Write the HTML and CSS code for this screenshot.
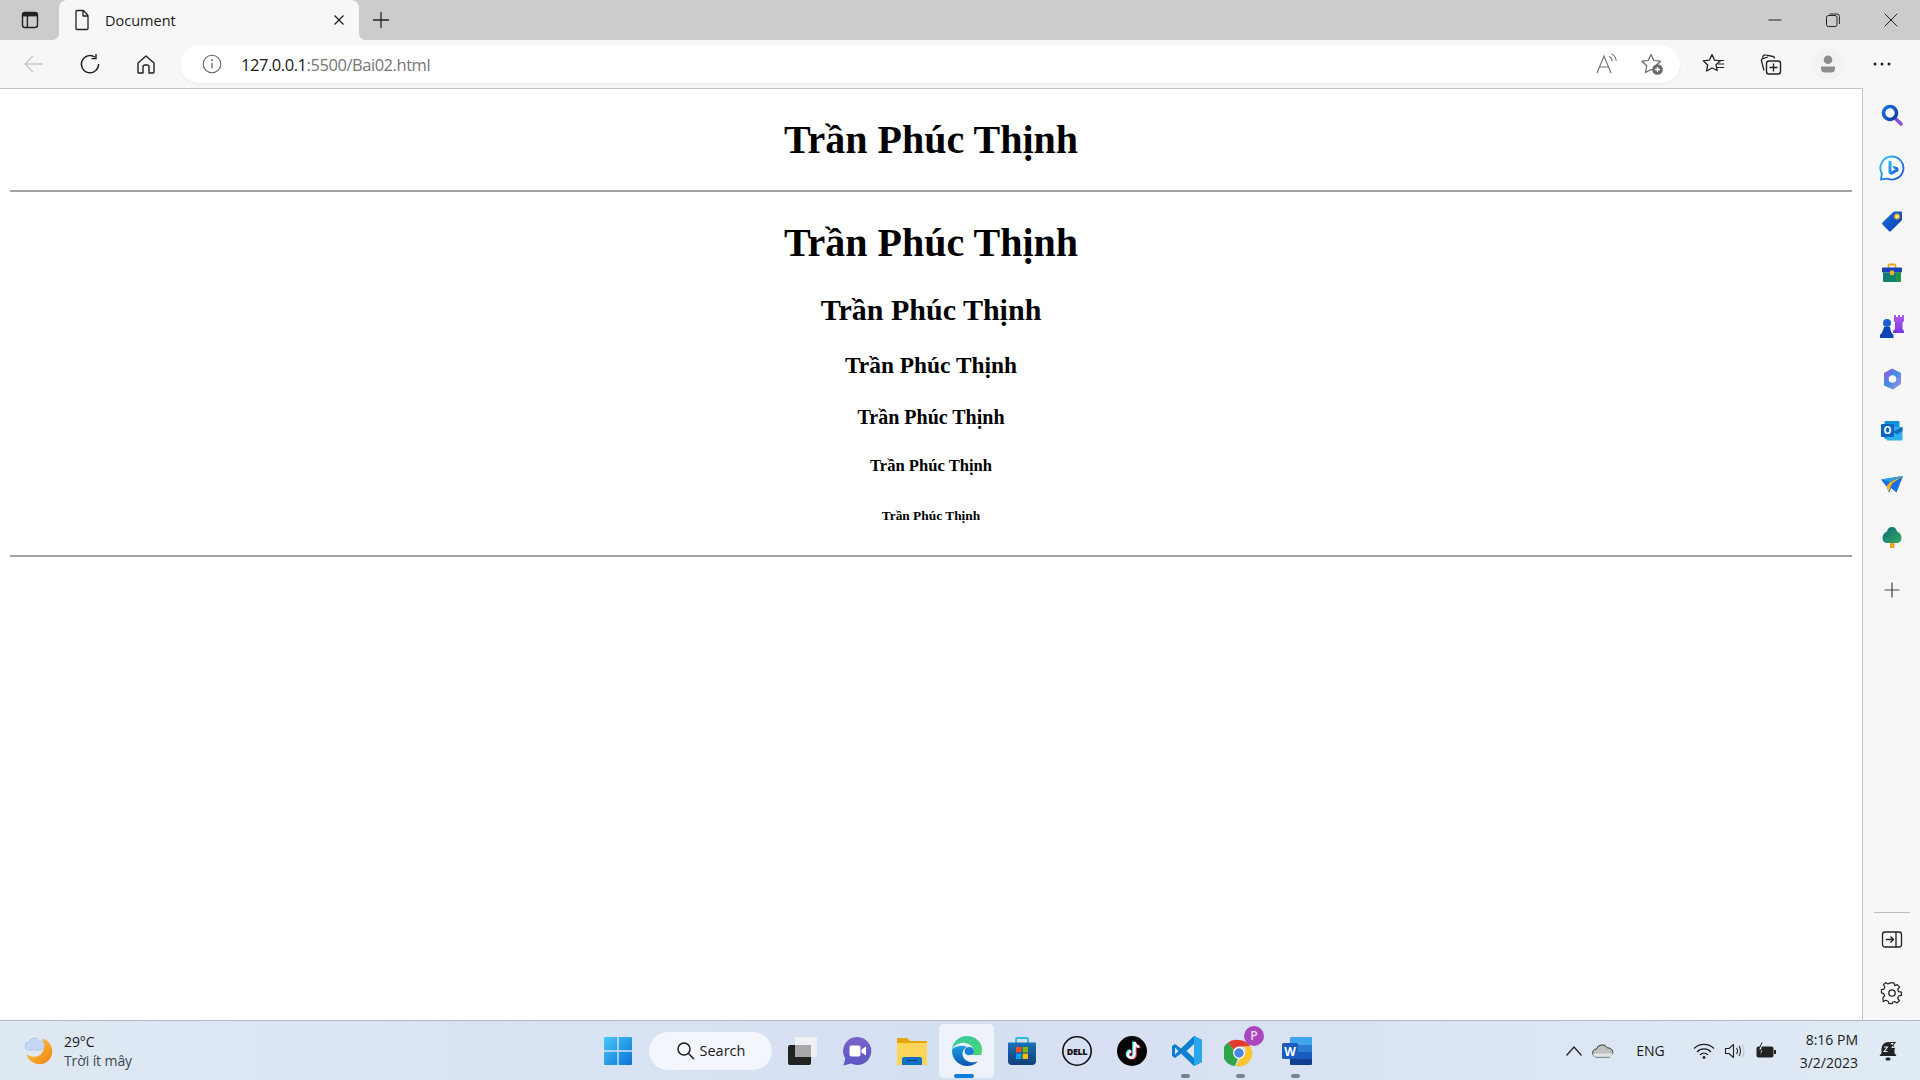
FILE: index.html
```html
<!DOCTYPE html>
<html lang="vi">
<head>
<meta charset="utf-8">
<title>Document</title>
<link rel="stylesheet" href="styles.css">
</head>
<body>
<svg class="defs" width="0" height="0" aria-hidden="true">
  <defs>
    <linearGradient id="gBlue" x1="0" y1="0" x2="1" y2="1"><stop offset="0" stop-color="#1c6fe0"/><stop offset="1" stop-color="#0b3fa8"/></linearGradient>
    <linearGradient id="gBing" x1="0" y1="0" x2="1" y2="1"><stop offset="0" stop-color="#27c3f5"/><stop offset="1" stop-color="#1a4fd0"/></linearGradient>
    <linearGradient id="gPurple" x1="0" y1="0" x2="0" y2="1"><stop offset="0" stop-color="#b05cf0"/><stop offset="1" stop-color="#7a35e0"/></linearGradient>
    <linearGradient id="gM365" x1="0" y1="0" x2="1" y2="1"><stop offset="0" stop-color="#9a55d8"/><stop offset=".5" stop-color="#3f8fe8"/><stop offset="1" stop-color="#b98ae0"/></linearGradient>
    <linearGradient id="gTree" x1="0" y1="0" x2="1" y2="1"><stop offset="0" stop-color="#0c6a7c"/><stop offset="1" stop-color="#35ab5c"/></linearGradient>
    <linearGradient id="gMoon" x1="0" y1="0" x2="1" y2="1"><stop offset="0" stop-color="#fcd14a"/><stop offset="1" stop-color="#f27f14"/></linearGradient>
    <linearGradient id="gWin" x1="0" y1="0" x2="1" y2="1"><stop offset="0" stop-color="#48c8fa"/><stop offset="1" stop-color="#0a72d6"/></linearGradient>
    <linearGradient id="gTeams" x1="0" y1="0" x2="0" y2="1"><stop offset="0" stop-color="#7c63c8"/><stop offset="1" stop-color="#5a57c0"/></linearGradient>
    <linearGradient id="gEdge" x1="0" y1="0" x2="1" y2="1"><stop offset="0" stop-color="#35c9a8"/><stop offset="1" stop-color="#46d86e"/></linearGradient>
    <linearGradient id="gEdge2" x1="0" y1="0" x2="0" y2="1"><stop offset="0" stop-color="#1f9fe0"/><stop offset="1" stop-color="#0b55b0"/></linearGradient>
    <linearGradient id="gStore" x1="0" y1="0" x2="0" y2="1"><stop offset="0" stop-color="#1a70b8"/><stop offset="1" stop-color="#123f78"/></linearGradient>
  </defs>
</svg>
<div class="window">
  <header class="tabbar">
    <div class="tabstrip-btn">
      <svg class="ic" width="20" height="20" viewBox="0 0 20 20"><rect x="2.5" y="2.5" width="15" height="15" rx="2.5" fill="none" stroke="#222" stroke-width="1.4"/><path d="M3 3h14v3.4H3z" fill="#222"/><path d="M7.4 6v11" stroke="#222" stroke-width="1.4"/></svg>
    </div>
    <div class="tab">
      <svg class="tab-doc" width="20" height="22" viewBox="0 0 20 22"><path d="M4 2.5a1 1 0 0 1 1-1h6.5L16 6.5V19.5a1 1 0 0 1-1 1H5a1 1 0 0 1-1-1zM11 2v5h5" fill="none" stroke="#222" stroke-width="1.3" stroke-linejoin="round"/></svg>
      <span class="tab-title">Document</span>
      <svg class="tab-close" width="12" height="12" viewBox="0 0 12 12"><path d="M1.5 1.5l9 9M10.5 1.5l-9 9" stroke="#222" stroke-width="1.4"/></svg>
    </div>
    <div class="newtab">
      <svg width="18" height="18" viewBox="0 0 18 18"><path d="M9 1v16M1 9h16" stroke="#222" stroke-width="1.3"/></svg>
    </div>
    <div class="win-controls">
      <div class="win-btn"><svg width="14" height="14" viewBox="0 0 14 14"><path d="M0.5 7h13" stroke="#222" stroke-width="1"/></svg></div>
      <div class="win-btn"><svg width="14" height="14" viewBox="0 0 14 14"><rect x="0.5" y="2.5" width="10.5" height="11" rx="2" fill="none" stroke="#222"/><path d="M3.5 1h7.5a2.4 2.4 0 0 1 2.4 2.4V11" fill="none" stroke="#222"/></svg></div>
      <div class="win-btn"><svg width="14" height="14" viewBox="0 0 14 14"><path d="M.7.7l12.6 12.6M13.3.7L.7 13.3" stroke="#222" stroke-width="1"/></svg></div>
    </div>
  </header>

  <nav class="toolbar">
    <div class="tool"><svg width="22" height="22" viewBox="0 0 22 22"><path d="M20 11H2.5M10 3l-8 8 8 8" fill="none" stroke="#c9c9c9" stroke-width="1.4"/></svg></div>
    <div class="tool"><svg width="22" height="22" viewBox="0 0 22 22"><path d="M16 4.2A8.6 8.6 0 1 0 19.6 11M17 1v4.6h-4.6" fill="none" stroke="#222" stroke-width="1.4"/></svg></div>
    <div class="tool"><svg width="22" height="22" viewBox="0 0 22 22"><path d="M3 10L11 3l8 7v9a1 1 0 0 1-1 1h-4v-6a2 2 0 0 0-2-2h-2a2 2 0 0 0-2 2v6H4a1 1 0 0 1-1-1z" fill="none" stroke="#222" stroke-width="1.4" stroke-linejoin="round"/></svg></div>
    <div class="address">
      <svg class="addr-info" width="20" height="20" viewBox="0 0 20 20"><circle cx="10" cy="10" r="8.8" fill="none" stroke="#666" stroke-width="1.1"/><path d="M10 9v5.5" stroke="#666" stroke-width="1.3"/><circle cx="10" cy="6" r="1" fill="#666"/></svg>
      <span class="url"><span class="url-host">127.0.0.1</span><span class="url-rest">:5500/Bai02.html</span></span>
      <svg class="addr-read" width="24" height="22" viewBox="0 0 24 22"><path d="M2 20L9 3l7 17M4.6 14h8.8" fill="none" stroke="#777" stroke-width="1.2"/><path d="M14 3.5c2 .8 3 2.5 3.2 4.5M16.5 1c3 1.2 4.4 3.6 4.7 6.7" fill="none" stroke="#777" stroke-width="1.1"/></svg>
      <svg class="addr-fav" width="24" height="24" viewBox="0 0 24 24"><path d="M11 2.5l2.8 6 6.7.7-4.5 4.3 1 5.5-6-1.5-5.5 3 1.2-6.7L2 9.2l6.3-.7z" fill="none" stroke="#666" stroke-width="1.2" stroke-linejoin="round"/><circle cx="17.5" cy="17.5" r="5.3" fill="#6a6a6a"/><path d="M17.5 15v5M15 17.5h5" stroke="#fff" stroke-width="1.3"/></svg>
    </div>
    <div class="tool tool-first"><svg width="24" height="24" viewBox="0 0 24 24"><path d="M10 2.5l2.5 5.7 6 .6-4.5 4 1.2 5.7L10 16l-5.5 3 1.2-6-4.5-4.2 6.2-.6z" fill="none" stroke="#222" stroke-width="1.3" stroke-linejoin="round"/><path d="M15 8.5h7M16 12h6M14.5 15.5h7.5" stroke="#222" stroke-width="1.2"/></svg></div>
    <div class="tool"><svg width="24" height="24" viewBox="0 0 24 24"><path d="M6 18.500l-2.500-9.500a2 2 0 0 1 1.300-2.400L10 5" fill="none" stroke="#222" stroke-width="1.300"/><path d="M4.500 5.800L5 4.200a2 2 0 0 1 2.400-1.300L15 4.500a2 2 0 0 1 1.500 2" fill="none" stroke="#222" stroke-width="1.300"/><rect x="8.500" y="9" width="14" height="13" rx="2.500" fill="none" stroke="#222" stroke-width="1.400"/><path d="M15.500 11.500v8M11.500 15.500h8" stroke="#222" stroke-width="1.300"/></svg></div>
    <div class="tool tool-profile"><span class="avatar"><svg width="20" height="20" viewBox="0 0 20 20"><circle cx="10" cy="5.800" r="4.300" fill="#8c8c8c"/><path d="M3 12.500h14v2a4 4 0 0 1-4 4H7a4 4 0 0 1-4-4z" fill="#8c8c8c"/></svg></span></div>
    <div class="tool"><svg width="20" height="6" viewBox="0 0 20 6"><circle cx="3" cy="3" r="1.500" fill="#222"/><circle cx="10" cy="3" r="1.500" fill="#222"/><circle cx="17" cy="3" r="1.500" fill="#222"/></svg></div>
  </nav>

  <div class="main">
    <main class="content">
      <h1 class="h-one">Trần Phúc Thịnh</h1>
      <hr class="rule">
      <h1 class="h-one">Trần Phúc Thịnh</h1>
      <h2 class="h-two">Trần Phúc Thịnh</h2>
      <h3 class="h-three">Trần Phúc Thịnh</h3>
      <h4 class="h-four">Trần Phúc Thịnh</h4>
      <h5 class="h-five">Trần Phúc Thịnh</h5>
      <h6 class="h-six">Trần Phúc Thịnh</h6>
      <hr class="rule">
    </main>
    <aside class="sidebar">
      <div class="side-btn"><svg width="24" height="24" viewBox="0 0 24 24"><path d="M15 15l6 6" stroke="#8a4fe0" stroke-width="3.600" stroke-linecap="round"/><circle cx="10" cy="10" r="6.500" fill="#fff" stroke="url(#gBlue)" stroke-width="3.600"/></svg></div>
      <div class="side-btn"><svg width="26" height="26" viewBox="0 0 26 26"><path d="M13 1.500a11.500 11.500 0 1 1-4.500 22.100L2 24.500l.9-5.800A11.500 11.500 0 0 1 13 1.500z" fill="#fff" stroke="url(#gBing)" stroke-width="1.800"/><path d="M9.500 5.500l3 1v10l4-2.300-2-1-1-2.700 6 2.200v3.300l-7 4-3-1.700z" fill="url(#gBing)"/></svg></div>
      <div class="side-btn"><svg width="24" height="24" viewBox="0 0 24 24"><path d="M2.500 13.500L13 3.200a2 2 0 0 1 1.400-.6H21a1 1 0 0 1 1 1v6.800a2 2 0 0 1-.6 1.400L11 22a1.500 1.500 0 0 1-2.100 0L2.500 15.600a1.500 1.500 0 0 1 0-2.100z" fill="url(#gBlue)"/><circle cx="17" cy="7.500" r="2.300" fill="#fbe9a8" stroke="#f0a81c" stroke-width="1.200"/></svg></div>
      <div class="side-btn"><svg width="24" height="24" viewBox="0 0 24 24"><path d="M8.500 7V4.500a1 1 0 0 1 1-1h5a1 1 0 0 1 1 1V7" fill="none" stroke="#eaa62a" stroke-width="1.800"/><rect x="2" y="6.500" width="20" height="5" rx="1" fill="#1a3fb8"/><path d="M3 11.500h18V20a1 1 0 0 1-1 1H4a1 1 0 0 1-1-1z" fill="#12806e"/><path d="M16 11.500h5V20a1 1 0 0 1-1 1h-4z" fill="#259448"/><rect x="10" y="9.500" width="4" height="4.500" rx="1" fill="#f1b32a"/></svg></div>
      <div class="side-btn"><svg width="26" height="26" viewBox="0 0 26 26"><path d="M15 2h2v2h2V2h2v2h2V2h2v6l-1.500 1.500V16L25 18v2H14v-2l2-2V9.500L15 8z" fill="url(#gPurple)"/><circle cx="8" cy="10" r="4" fill="#1c5fd0"/><path d="M5 14h6l.5 3 1.500 3.500a2 2 0 0 1 1.500 2V25H1v-2.500a2 2 0 0 1 1.500-2L4 17z" fill="#0f45b8"/></svg></div>
      <div class="side-btn"><svg width="24" height="24" viewBox="0 0 24 24"><path d="M12 1.500l9 4.500v11l-8 5.500-9-4V6z" fill="url(#gM365)"/><circle cx="12.500" cy="12" r="3.800" fill="#f7f7f7"/></svg></div>
      <div class="side-btn"><svg width="24" height="24" viewBox="0 0 24 24"><rect x="4.500" y="2" width="15" height="18" rx="1" fill="#1490df"/><path d="M13 8h8.500a1 1 0 0 1 1 1v11.500a1 1 0 0 1-1 1h-14a1 1 0 0 1-1-1V17z" fill="#30b0ea"/><path d="M13 12.500l9.500-4.500v4l-6 3.500z" fill="#0f6cbd"/><rect x="1" y="5" width="13" height="13" rx="1" fill="#0a64c0"/><text class="svg-o" x="7.500" y="15.300" text-anchor="middle">O</text></svg></div>
      <div class="side-btn"><svg width="24" height="24" viewBox="0 0 24 24"><path d="M1 7.500L23 4 16.500 20.500 11 16l-2 5-2.500-6.500z" fill="#1a6ee0"/><path d="M1 7.500L23 4l-13 5.500z" fill="#2aa0e8"/><path d="M6.500 14.500L10 10l13-6-11 7.500L8.500 20z" fill="#f5b31e"/></svg></div>
      <div class="side-btn"><svg width="24" height="24" viewBox="0 0 24 24"><rect x="10" y="17" width="4.500" height="6" fill="#f0a51e"/><path d="M12 2c3 0 4.500 2 5 4.500 2.800 1 4.500 3.800 4.500 6.500 0 3-2 5-4.500 5H7c-2.500 0-4.500-2-4.500-5 0-2.700 1.700-5.500 4.500-6.500C7.500 4 9 2 12 2z" fill="url(#gTree)"/></svg></div>
      <div class="side-btn"><svg width="16" height="16" viewBox="0 0 16 16"><path d="M8 .5v15M.5 8h15" stroke="#444" stroke-width="1.200"/></svg></div>
      <div class="side-spacer"></div>
      <div class="side-line"></div>
      <div class="side-btn"><svg width="22" height="22" viewBox="0 0 22 22"><rect x="1.500" y="3" width="19" height="15" rx="2.500" fill="none" stroke="#222" stroke-width="1.300"/><path d="M15 3v15" stroke="#222" stroke-width="1.300"/><path d="M5 10.500h7M9.500 7.500l3 3-3 3" fill="none" stroke="#222" stroke-width="1.300"/></svg></div>
      <div class="side-btn"><svg width="24" height="24" viewBox="0 0 24 24"><path d="M10 2h4l.8 3 2.700-1.100L20 6.500l-2 2.300.9 2.700 3 .5v3.500l-3 .6-1 2.500 2 2.400-2.600 2.500-2.700-1.500-2 .9-.6 1.500h-3.500l-.8-2.600-2.700-1.100-2.500 1.400L2 18.500l1.800-2.400L3 13.500l-2.500-.7v-3.600l2.800-.5.800-2.500L2.500 4l2.600-2.300L7.500 3.300 9.800 2z" transform="translate(1 0) scale(.93)" fill="none" stroke="#222" stroke-width="1.300" stroke-linejoin="round"/><circle cx="12" cy="12" r="3.200" fill="none" stroke="#222" stroke-width="1.300"/></svg></div>
    </aside>
  </div>

  <footer class="taskbar">
    <div class="weather">
      <svg width="32" height="32" viewBox="0 0 32 32"><path d="M19 3.500A13 13 0 1 1 3.500 19c3 3 12 5 16-2 2-3.500 1.500-9-.5-13.500z" fill="url(#gMoon)"/><path d="M6 15a4 4 0 0 1 0-8 5.500 5.500 0 0 1 10-1.500A4.500 4.500 0 0 1 17 15z" fill="#c6d8f5" stroke="#9cb8e8" stroke-width=".6"/></svg>
      <div class="weather-text"><span class="temp">29°C</span><span class="cond">Trời ít mây</span></div>
    </div>
    <div class="apps">
      <div class="app"><svg width="30" height="30" viewBox="0 0 30 30"><path d="M1 2a1 1 0 0 1 1-1h12.300v13.300H1zM15.700 1H28a1 1 0 0 1 1 1v12.300H15.700zM1 15.700h13.300V29H2a1 1 0 0 1-1-1zM15.700 15.700H29V28a1 1 0 0 1-1 1H15.700z" fill="url(#gWin)"/></svg></div>
      <div class="search">
        <svg width="19" height="19" viewBox="0 0 19 19"><circle cx="8" cy="8" r="6" fill="none" stroke="#1a1a1a" stroke-width="1.500"/><path d="M12.500 12.500l5.500 5.500" stroke="#1a1a1a" stroke-width="1.500"/></svg>
        <span>Search</span>
      </div>
      <div class="app"><svg width="30" height="30" viewBox="0 0 30 30"><rect x="1" y="9" width="23" height="20" rx="2" fill="#222"/><rect x="8" y="1" width="22" height="20" rx="1.500" fill="#f3f3f5" opacity=".9"/><rect x="8" y="9" width="16" height="12" fill="#a8a8a8"/></svg></div>
      <div class="app"><svg width="30" height="30" viewBox="0 0 30 30"><path d="M15.500 1a14 14 0 1 1-6.500 26.500L1.500 29.500l1.800-7A14 14 0 0 1 15.500 1z" fill="url(#gTeams)"/><rect x="7.500" y="9.500" width="11" height="11" rx="2" fill="#fff"/><path d="M19.500 13.500l4.500-3v9l-4.500-3z" fill="#fff"/></svg></div>
      <div class="app"><svg width="32" height="30" viewBox="0 0 32 30"><path d="M1 3a1 1 0 0 1 1-1h9l3 3h16a1 1 0 0 1 1 1v22a1 1 0 0 1-1 1H2a1 1 0 0 1-1-1z" fill="#e5a505"/><path d="M1 7h30v21a1 1 0 0 1-1 1H2a1 1 0 0 1-1-1z" fill="#fcd65a"/><path d="M6 29v-6a2 2 0 0 1 2-2h16a2 2 0 0 1 2 2v6z" fill="#1070c8"/><path d="M11 24.500h10" stroke="#0c3f80" stroke-width="1.200"/></svg></div>
      <div class="app app-active"><svg width="32" height="32" viewBox="0 0 32 32"><path d="M16 1C8 1 1.500 7 1 15c2-5 8-8 13-7 6 1 9 5 9 9 0 2-1.500 3-4 3h11c1-2 1-4 1-6C31 7 24 1 16 1z" fill="url(#gEdge)"/><path d="M1 15c-.5 9 7 16 15 16 4 0 8-1.500 11-4.500-6 2-13 0-15-5-1.500-4 .5-8 4-9.500-6-3-14 .5-15 3z" fill="url(#gEdge2)"/><path d="M19 20c-5 1-7-4-4-7 3-2 8-1 8 4 0 2-1.500 3-4 3z" fill="#1d7ed8"/></svg><span class="active-dot"></span></div>
      <div class="app"><svg width="30" height="30" viewBox="0 0 30 30"><path d="M9 7V3.500a1.500 1.500 0 0 1 1.500-1.500h9A1.500 1.500 0 0 1 21 3.500V7" fill="none" stroke="#28b8ea" stroke-width="1.800"/><path d="M1 7.500a1 1 0 0 1 1-1h26a1 1 0 0 1 1 1V25a4 4 0 0 1-4 4H5a4 4 0 0 1-4-4z" fill="url(#gStore)"/><rect x="9" y="11" width="5.400" height="5.400" fill="#f25022"/><rect x="15.600" y="11" width="5.400" height="5.400" fill="#7fba00"/><rect x="9" y="17.600" width="5.400" height="5.400" fill="#00a4ef"/><rect x="15.600" y="17.600" width="5.400" height="5.400" fill="#ffb900"/></svg></div>
      <div class="app"><svg width="32" height="32" viewBox="0 0 32 32"><circle cx="16" cy="16" r="14.200" fill="none" stroke="#111" stroke-width="1.600"/><text class="svg-dell" x="16" y="19.500" text-anchor="middle">DELL</text></svg></div>
      <div class="app"><svg width="32" height="32" viewBox="0 0 32 32"><circle cx="16" cy="16" r="15" fill="#050505"/><path d="M18.500 7v12.500a3.300 3.300 0 1 1-3.300-3.300" fill="none" stroke="#25f4ee" stroke-width="2.600" transform="translate(-1 -.6)"/><path d="M18.500 7v12.500a3.300 3.300 0 1 1-3.300-3.300M18.500 7c.4 2.800 2.300 4.500 4.800 4.700" fill="none" stroke="#fe2c55" stroke-width="2.600" transform="translate(1 .6)"/><path d="M18.500 7v12.500a3.300 3.300 0 1 1-3.300-3.300M18.500 7c.4 2.800 2.300 4.500 4.800 4.700" fill="none" stroke="#fff" stroke-width="2.400"/></svg></div>
      <div class="app app-open"><svg width="32" height="32" viewBox="0 0 32 32"><path d="M23 1l8 4v22l-8 4-13-12.500-6 4.500-3-2V11l3-2 6 4.500z" fill="#0b7fd0"/><path d="M23 1l8 4v22l-8 4z" fill="#2aa6ee"/><path d="M23 9l-7.500 7 7.500 7zM4 12.500v7l3.500-3.500z" fill="#dde5f3"/></svg><span class="open-dot"></span></div>
      <div class="app app-open"><svg class="chrome" width="32" height="32" viewBox="0 0 32 32"><path d="M15 5a13 13 0 0 1 11.300 6.500H15a6 6 0 0 0-5.500 3.500L4 7.500A13 13 0 0 1 15 5z" fill="#e33b2e"/><path d="M4 7.500L9.500 15a6 6 0 0 0 5 7L11 31A13 13 0 0 1 4 7.500z" fill="#2fa54a"/><path d="M26.300 11.500A13 13 0 0 1 12 31l5-9a6 6 0 0 0 2.500-10.500z" fill="#fbc52d"/><circle cx="15" cy="18" r="5.300" fill="#4a86ea" stroke="#fff" stroke-width="1.200"/></svg><span class="badge">P</span><span class="open-dot"></span></div>
      <div class="app app-open"><svg width="32" height="30" viewBox="0 0 32 30"><path d="M9 2a1 1 0 0 1 1-1h20a1 1 0 0 1 1 1v7H9z" fill="#41a5ee"/><rect x="9" y="9" width="22" height="7" fill="#2b7cd3"/><rect x="9" y="16" width="22" height="7" fill="#185abd"/><path d="M9 23h22v5a1 1 0 0 1-1 1H10a1 1 0 0 1-1-1z" fill="#103f91"/><rect x="1" y="7" width="16" height="16" rx="1.500" fill="#1a5cbf"/><text class="svg-w" x="9" y="19.700" text-anchor="middle">W</text></svg><span class="open-dot"></span></div>
    </div>
    <div class="tray">
      <svg class="tray-ic" width="18" height="12" viewBox="0 0 18 12"><path d="M1.500 10.500L9 2l7.500 8.500" fill="none" stroke="#222" stroke-width="1.200"/></svg>
      <svg class="tray-ic" width="22" height="14" viewBox="0 0 22 14"><path d="M5 13a4 4 0 0 1-.5-8A6 6 0 0 1 15.500 4 4.500 4.500 0 0 1 17 13z" fill="#c0c0c0" stroke="#333" stroke-width="1"/><path d="M1 9.500h20v1a2.500 2.500 0 0 1-2.500 2.500h-15A2.500 2.500 0 0 1 1 10.500z" fill="#f0f0f0" opacity=".75"/></svg>
      <span class="lang">ENG</span>
      <svg class="tray-ic" width="22" height="18" viewBox="0 0 22 18"><path d="M1 6.500a14 14 0 0 1 20 0M4 10a9.500 9.500 0 0 1 14 0M7 13a5 5 0 0 1 8 0" fill="none" stroke="#222" stroke-width="1.200"/><circle cx="11" cy="15.500" r="1.400" fill="#222"/></svg>
      <svg class="tray-ic" width="22" height="18" viewBox="0 0 22 18"><path d="M1.500 6.500h3.500L9.500 2.500v13L5 11.500H1.500z" fill="none" stroke="#222" stroke-width="1.100" stroke-linejoin="round"/><path d="M12.500 6c1.200 1.700 1.200 4.300 0 6M15 4c2 2.800 2 7.200 0 10" fill="none" stroke="#222" stroke-width="1.100"/><path d="M18 2.500c2.600 3.800 2.600 9.200 0 13" fill="none" stroke="#b8c2cc" stroke-width="1.100"/></svg>
      <svg class="tray-ic" width="22" height="18" viewBox="0 0 22 18"><rect x="1.500" y="4.500" width="17" height="11" rx="2" fill="#222"/><path d="M20 8v4" stroke="#222" stroke-width="2"/><path d="M7 .5L3.500 8H8L5.500 13.500" fill="#e6eef6" stroke="#222" stroke-width="1"/></svg>
      <div class="clock"><span>8:16 PM</span><span>3/2/2023</span></div>
      <svg class="tray-ic" width="20" height="22" viewBox="0 0 20 22"><path d="M10 2a6.500 6.500 0 0 0-6.500 6.500V13L1.500 16h17L16.500 13V8.500A6.500 6.500 0 0 0 10 2z" fill="#222"/><rect x="7.500" y="17.500" width="5" height="3" rx="1.500" fill="#222"/><path d="M6 7h3.500L6 11.500h3.500" fill="none" stroke="#e6eef6" stroke-width="1.100"/><path d="M12 2.500h5l-5 6h5" fill="#e6eef6" stroke="#222" stroke-width="1.100"/></svg>
    </div>
  </footer>
</div>
</body>
</html>
```

FILE: styles.css
```css
* { box-sizing: border-box; }
html, body { margin: 0; padding: 0; height: 100%; overflow: hidden; background: #fff; }
body { font-family: "Open Sans", "Noto Sans", "Liberation Sans", sans-serif; color: #1a1a1a; }
.defs { display: block; height: 0; width: 0; }
svg { display: block; flex: none; }
.window { display: flex; flex-direction: column; width: 1920px; height: 1080px; }

.tabbar { display: flex; align-items: stretch; height: 40px; flex: none; background: #cccccc; }
.tabstrip-btn { width: 59px; display: flex; align-items: center; justify-content: center; }
.tab { position: relative; width: 300px; display: flex; align-items: center; background: #f7f7f7; border-radius: 8px 8px 0 0; padding: 0 14px 0 13px; }
.tab::before, .tab::after { content: ""; position: absolute; bottom: 0; width: 6px; height: 6px; background: radial-gradient(circle at 0 0, #ccc 5.5px, #f7f7f7 6px); }
.tab::before { left: -6px; transform: scaleX(1); }
.tab::after { right: -6px; transform: scaleX(-1); transform-origin: center; background: radial-gradient(circle at 100% 0, #f7f7f7 0, #f7f7f7 0); background: radial-gradient(circle at 0 0, #ccc 5.5px, #f7f7f7 6px); }
.tab-doc { margin-right: 13px; }
.tab-title { flex: 1; font-family: "Open Sans", sans-serif; font-size: 14.5px; color: #1a1a1a; }
.newtab { width: 44px; display: flex; align-items: center; justify-content: center; }
.win-controls { margin-left: auto; display: flex; }
.win-btn { width: 58px; display: flex; align-items: center; justify-content: center; }

.toolbar { display: flex; align-items: center; height: 48px; flex: none; background: #f7f7f7; padding-left: 6px; padding-right: 10px; }
.tool { width: 56px; height: 38px; display: flex; align-items: center; justify-content: center; flex: none; }
.address { flex: 1; height: 38px; margin-left: 6px; margin-right: 6px; display: flex; align-items: center; background: #fff; border-radius: 19px; box-shadow: 0 1px 3px rgba(0,0,0,.06); padding-left: 22px; padding-right: 16px; }
.url { flex: 1; margin-left: 19px; font-family: "Open Sans", sans-serif; font-size: 16.5px; letter-spacing: -.45px; }
.url-host { color: #1a1a1a; }
.url-rest { color: #767676; }
.addr-read { margin-right: 21px; }
.tool-profile { margin-left: 2px; margin-right: -2px; }
.avatar { width: 32px; height: 32px; border-radius: 50%; background: #f2f2f2; display: flex; align-items: center; justify-content: center; }

.main { flex: 1; display: flex; min-height: 0; }
.content { flex: 1; min-width: 0; background: #fff; border-top: 1px solid #c4c4c4; border-right: 1px solid #c4c4c4; padding: .1px 10px 0; font-family: "Liberation Serif", "Times New Roman", serif; color: #000; text-align: center; }
.h-one, .h-two, .h-three, .h-four, .h-five, .h-six { font-weight: 700; }
.h-one { font-size: 40px; margin: 27px 0; }
.h-two { font-size: 30px; margin: 25px 0; }
.h-three { font-size: 23.4px; margin: 23.400px 0; }
.h-four { font-size: 20px; margin: 26.600px 0; }
.h-five { font-size: 16.600px; margin: 27.700px 0; }
.h-six { font-size: 13.400px; margin: 31.200px 0; }
.rule { margin: 10px 0; border: 0; height: 2px; background: #a3a3a3; }

.sidebar { width: 57px; flex: none; background: #f7f7f7; display: flex; flex-direction: column; align-items: center; padding-top: 1px; padding-bottom: 1px; }
.side-btn { width: 100%; height: 52.700px; display: flex; align-items: center; justify-content: center; flex: none; }
.side-spacer { flex: 1; }
.side-line { width: 36px; height: 1px; background: #bdbdbd; margin-bottom: 1px; flex: none; }

.taskbar { position: relative; height: 60px; flex: none; display: grid; grid-template-columns: 590px auto 1fr; align-items: center; border-top: 1px solid #b4b9c6; background: linear-gradient(90deg, #dfe9f3 0%, #d9e4f3 25%, #d5dff2 50%, #d9e3f3 70%, #e0ebf5 100%); }
.weather { display: flex; align-items: center; padding-left: 23px; gap: 9px; }
.weather-text { display: flex; flex-direction: column; font-family: "Open Sans", sans-serif; font-size: 14px; line-height: 19px; letter-spacing: -.1px; }
.temp { color: #1a1a1a; }
.cond { color: #3c4650; }
.apps { display: flex; align-items: center; }
.app { position: relative; width: 55px; height: 54px; display: flex; align-items: center; justify-content: center; flex: none; }
.app:first-child { margin-right: 4px; }
.search { width: 123px; height: 38px; margin-right: 2px; flex: none; border-radius: 19px; background: #f3f6fc; display: flex; align-items: center; justify-content: center; gap: 5px; font-family: "Open Sans", sans-serif; font-size: 14.500px; color: #1a1a1a; }
.app-active { background: #eef3fb; border-radius: 5px; }
.active-dot { position: absolute; left: 15px; bottom: 0; width: 20px; height: 4px; border-radius: 2px; background: #0f7ad8; }
.open-dot { position: absolute; left: 22px; bottom: 0; width: 9px; height: 4px; border-radius: 2px; background: #7c828c; }
.badge { position: absolute; left: 30px; top: 2px; width: 20px; height: 20px; border-radius: 50%; background: #ab47bc; color: #f3d9f7; font-family: "Open Sans", sans-serif; font-size: 12px; font-weight: 600; display: flex; align-items: center; justify-content: center; }
.chrome { margin-left: -4px; }
.tray { display: flex; align-items: center; justify-content: flex-end; padding-right: 22px; color: #1a1a1a; }
.tray-ic { margin-left: 9px; }
.lang { font-family: "Open Sans", sans-serif; font-size: 14px; margin-left: 22px; margin-right: 19px; }
.clock { display: flex; flex-direction: column; align-items: flex-end; margin-left: 23px; margin-right: 11px; font-family: "Open Sans", sans-serif; font-size: 14px; line-height: 23px; }
.svg-o { font: 700 10px "Open Sans", sans-serif; fill: #fff; }
.svg-w { font: 700 12px "Open Sans", sans-serif; fill: #fff; }
.svg-dell { font: 800 9px "Open Sans", sans-serif; fill: #111; letter-spacing: -.4px; }
```
